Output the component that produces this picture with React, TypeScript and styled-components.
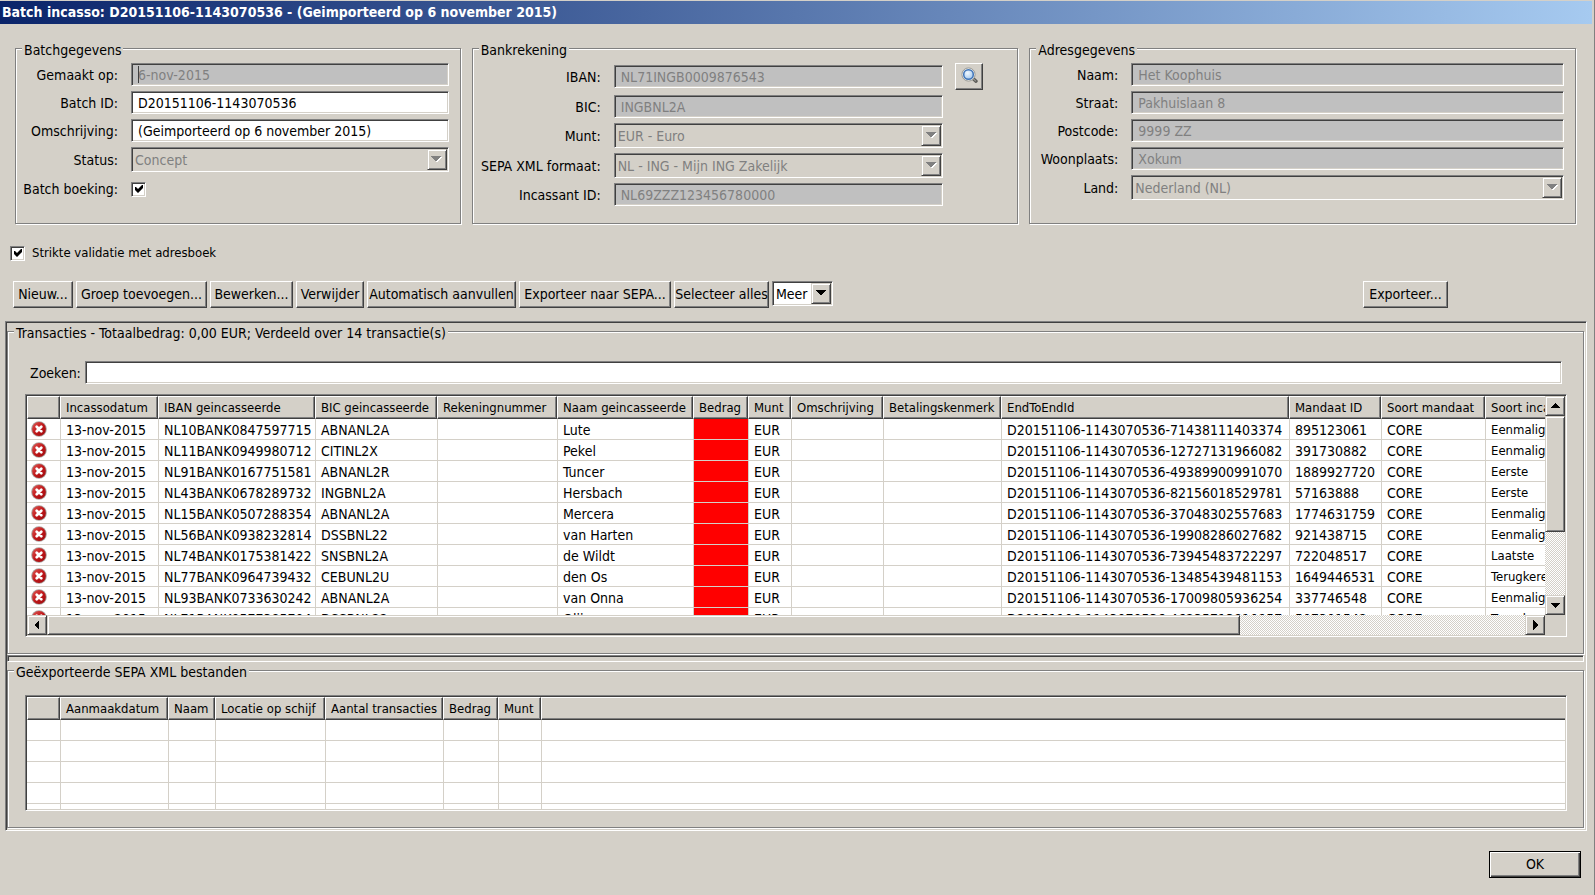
import React from "react";
import styled, { createGlobalStyle, css } from "styled-components";

const face = "#d4d0c8";
const shadow = "#808080";
const dark = "#404040";
const light = "#ffffff";

const GlobalStyle = createGlobalStyle`
  * { box-sizing: border-box; }
  body { margin: 0; background: ${face}; }
  body, button, input, select {
    font-family: "DejaVu Sans Condensed", "DejaVu Sans", sans-serif;
    font-size: 14px;
    line-height: 16px;
    color: #000;
  }
`;

const sunken = css`
  border: 1px solid;
  border-color: ${shadow} ${light} ${light} ${shadow};
  box-shadow: inset 1px 1px 0 ${dark}, inset -1px -1px 0 ${face};
`;

const raised = css`
  border: 1px solid;
  border-color: ${light} ${dark} ${dark} ${light};
  box-shadow: inset -1px -1px 0 ${shadow};
`;

const thumbEdge = css`
  border: 1px solid;
  border-color: ${face} ${dark} ${dark} ${face};
  box-shadow: inset 1px 1px 0 ${light}, inset -1px -1px 0 ${shadow};
`;

const Window = styled.main`
  display: flex;
  flex-direction: column;
  min-height: 100vh;
  padding: 1px 0 16px;
  background: ${face};
  border-right: 1px solid ${shadow};
`;

const TitleBar = styled.h1`
  margin: 0 2px 0 0;
  height: 23px;
  padding-left: 2px;
  font-size: 14px;
  line-height: 23px;
  font-weight: bold;
  color: #fff;
  white-space: nowrap;
  background: linear-gradient(to right, #0a246a, #a6caf0);
`;

const Groups = styled.div`
  display: grid;
  grid-template-columns: 446fr 547fr 547fr;
  gap: 11px;
  padding: 16px 18px 0 15px;
`;

const Group = styled.fieldset`
  min-width: 0;
  margin: 0;
  padding: 0;
  border: 1px solid ${shadow};
  box-shadow: 1px 1px 0 ${light}, inset 1px 1px 0 ${light};
`;

const Legend = styled.legend`
  margin-left: 6px;
  padding: 4px 2px 0;
  line-height: 12px;
  background: ${face};
`;

const FormGrid = styled.div<{ $label: number; $side?: boolean }>`
  display: grid;
  grid-template-columns: ${(p) => p.$label}px minmax(0, 1fr) ${(p) => (p.$side ? "28px" : "")};
  column-gap: 12px;
  row-gap: 5px;
  align-items: center;
  padding: 7px ${(p) => (p.$side ? 34 : 11)}px 17px 0;
`;

const Label = styled.label`
  grid-column: 1;
  padding-right: 1px;
  text-align: right;
  white-space: nowrap;
`;

const CheckLabel = styled(Label)`
  line-height: 24px;
`;

const Field = styled.div`
  position: relative;
  grid-column: 2;
  display: flex;
`;

const TextBox = styled.input`
  ${sunken}
  flex: 1;
  min-width: 0;
  height: 23px;
  padding: 0 6px;
  border-radius: 0;
  outline: 0;
  background: #fff;
  &:disabled { background: #c0c0c0; color: ${shadow}; }
`;

const Caret = styled.span`
  position: absolute;
  left: 7px;
  top: 3px;
  width: 1px;
  height: 17px;
  background: ${dark};
`;

const SelectWrap = styled.div<{ $width?: number }>`
  position: relative;
  grid-column: 2;
  display: flex;
  width: ${(p) => (p.$width ? p.$width + "px" : "auto")};
`;

const SelectBox = styled.select`
  ${sunken}
  appearance: none;
  flex: 1;
  min-width: 0;
  height: 25px;
  padding: 0 22px 0 3px;
  border-radius: 0;
  outline: 0;
  background: #fff;
  &:disabled { background: ${face}; color: ${shadow}; opacity: 1; }
`;

const DropArrow = styled.span`
  ${thumbEdge}
  position: absolute;
  top: 2px;
  right: 2px;
  bottom: 2px;
  width: 20px;
  display: grid;
  place-items: center;
  background: ${face};
  pointer-events: none;
`;

const CheckWrap = styled.span`
  position: relative;
  grid-column: 2;
  width: 15px;
  height: 15px;
  svg { position: absolute; left: 4px; top: 3px; pointer-events: none; }
`;

const CheckBox = styled.input`
  ${sunken}
  appearance: none;
  display: block;
  width: 15px;
  height: 15px;
  margin: 0;
  background: #fff;
`;

const StrictRow = styled.div`
  display: flex;
  align-items: center;
  gap: 7px;
  padding: 21px 10px 0;
  font-size: 13px;
`;

const Toolbar = styled.div`
  display: flex;
  align-items: flex-start;
  gap: 3px;
  padding: 20px 146px 13px 13px;
`;

const Button = styled.button<{ $width: number }>`
  ${raised}
  flex: none;
  width: ${(p) => p.$width}px;
  height: 27px;
  padding: 0 0 2px;
  border-radius: 0;
  background: ${face};
  white-space: nowrap;
  display: grid;
  place-items: center;
`;

const ExportButton = styled(Button)`
  margin-left: auto;
`;

const DefaultButton = styled(Button)`
  border-color: #000;
  box-shadow: inset 1px 1px 0 ${light}, inset -1px -1px 0 ${dark}, inset -2px -2px 0 ${shadow};
`;

const SplitFrame = styled.div`
  ${sunken}
  margin: 0 7px 0 5px;
  padding: 1px 2px 2px 1px;
`;

const Splitter = styled.div`
  ${sunken}
  height: 7px;
  margin-top: 1px;
`;

const SearchRow = styled.div`
  display: flex;
  align-items: center;
  margin: 22px 21px 10px 22px;
`;

const SearchLabel = styled.label`
  width: 55px;
`;

const ExportArea = styled.div`
  padding-top: 17px;
`;

const TableFrame = styled.div`
  ${sunken}
  display: grid;
  grid-template-columns: minmax(0, 1fr) auto;
  padding: 1px;
  margin: 0 16px 16px 17px;
`;

const Viewport = styled.div<{ $height: number }>`
  height: ${(p) => p.$height}px;
  overflow: hidden;
  background: #fff;
`;

const Table = styled.table`
  width: 100%;
  table-layout: fixed;
  border-collapse: separate;
  border-spacing: 0;
`;

const HeadCell = styled.th`
  height: 23px;
  padding: 0 0 0 5px;
  border: 1px solid;
  border-color: ${light} ${dark} ${dark} ${light};
  box-shadow: inset -1px -1px 0 ${shadow};
  background: ${face};
  font-size: 13px;
  font-weight: normal;
  text-align: left;
  white-space: nowrap;
  overflow: hidden;
  &:last-child { border-right: 0; box-shadow: inset 0 -1px 0 ${shadow}; }
`;

const Cell = styled.td<{ $alert?: boolean }>`
  height: 21px;
  padding: 2px 0 0 5px;
  border-left: 1px solid ${face};
  border-bottom: 1px solid ${face};
  background: ${(p) => (p.$alert ? "#ff0000" : "#fff")};
  background-clip: padding-box;
  white-space: nowrap;
  overflow: hidden;
  &:first-child { border-left: 0; padding: 0 0 0 4px; }
  &:last-child { font-size: 13px; }
  svg { display: block; }
`;

const dither = css`
  background: conic-gradient(#fff 25%, ${face} 0 50%, #fff 0 75%, ${face} 0) 0 0 / 2px 2px;
`;

const VScroll = styled.div`
  ${dither}
  display: flex;
  flex-direction: column;
  width: 20px;
`;

const HScroll = styled.div`
  ${dither}
  display: flex;
  height: 20px;
`;

const ScrollButton = styled.button`
  ${thumbEdge}
  flex: none;
  width: 20px;
  height: 20px;
  padding: 0;
  border-radius: 0;
  background: ${face};
  display: grid;
  place-items: center;
`;

const ScrollThumb = styled.div<{ $share: number }>`
  ${thumbEdge}
  flex: ${(p) => p.$share} 0 0;
  background: ${face};
`;

const ScrollRest = styled.div<{ $share: number }>`
  flex: ${(p) => p.$share} 0 0;
`;

const Footer = styled.footer`
  display: flex;
  justify-content: flex-end;
  padding: 20px 13px 0;
`;

const Tick = () => (
  <svg width="8" height="8" viewBox="0 0 8 8" aria-hidden="true">
    <path d="M0 2L1 2L3 4L7 0H8V3L3 8L0 5Z" fill="#000" />
  </svg>
);

const Down = ({ off }: { off?: boolean }) => (
  <svg width="11" height="7" viewBox="0 0 11 7" shapeRendering="crispEdges" aria-hidden="true">
    {off && <path d="M1 1H11L6 7Z" fill="#fff" />}
    <path d="M0 0H10L5 6Z" fill={off ? shadow : "#000"} />
  </svg>
);

const arrows = {
  up: "M0 7L5 2L10 7Z",
  down: "M0 3H10L5 8Z",
  left: "M7 0V10L2 5Z",
  right: "M3 0V10L8 5Z",
};

const ScrollArrow = ({ dir }: { dir: keyof typeof arrows }) => (
  <ScrollButton type="button" aria-label={dir}>
    <svg width="10" height="10" viewBox="0 0 10 10" shapeRendering="crispEdges">
      <path d={arrows[dir]} fill="#000" />
    </svg>
  </ScrollButton>
);

const ErrorIcon = () => (
  <svg width="16" height="16" viewBox="0 0 16 16" role="img" aria-label="Fout">
    <defs>
      <linearGradient id="errorFill" x1="0" y1="0" x2="1" y2="1">
        <stop offset="0" stopColor="#e05a56" />
        <stop offset="0.5" stopColor="#c0181a" />
        <stop offset="1" stopColor="#9c0a0e" />
      </linearGradient>
    </defs>
    <circle cx="8" cy="8" r="7.8" fill="#aaa19e" />
    <circle cx="8" cy="8" r="6.9" fill="url(#errorFill)" />
    <path d="M5.7 5.7L10.3 10.3M10.3 5.7L5.7 10.3" stroke="#fff" strokeWidth="2.8" strokeLinecap="round" />
  </svg>
);

const SearchIcon = () => (
  <svg width="17" height="17" viewBox="0 0 17 17" aria-hidden="true">
    <defs>
      <radialGradient id="lensFill" cx="0.4" cy="0.35" r="0.7">
        <stop offset="0" stopColor="#f0f8ff" />
        <stop offset="1" stopColor="#a2c6ec" />
      </radialGradient>
    </defs>
    <path d="M12 11.5L15 14.2" stroke="#5c5c58" strokeWidth="3.4" strokeLinecap="round" />
    <path d="M12.5 12L14.5 13.8" stroke="#b4b4b0" strokeWidth="1" strokeLinecap="round" />
    <circle cx="7.5" cy="7.5" r="6.6" fill="#eeeeea" stroke="#9c9c98" strokeWidth="1" />
    <circle cx="7.5" cy="7.5" r="4.8" fill="url(#lensFill)" stroke="#3f74b8" strokeWidth="1.5" />
  </svg>
);

type TextFieldProps = { id: string; label: string; value: string; disabled?: boolean; caret?: boolean };
const TextField = ({ id, label, value, disabled, caret }: TextFieldProps) => (
  <>
    <Label htmlFor={id}>{label}</Label>
    <Field>
      <TextBox id={id} type="text" defaultValue={value} disabled={disabled} />
      {caret && <Caret />}
    </Field>
  </>
);

const SelectField = ({ id, label, value }: { id: string; label: string; value: string }) => (
  <>
    <Label htmlFor={id}>{label}</Label>
    <SelectWrap>
      <SelectBox id={id} disabled>
        <option>{value}</option>
      </SelectBox>
      <DropArrow>
        <Down off />
      </DropArrow>
    </SelectWrap>
  </>
);

const columns: [string, number | undefined][] = [
  ["", 33],
  ["Incassodatum", 98],
  ["IBAN geincasseerde", 157],
  ["BIC geincasseerde", 122],
  ["Rekeningnummer", 120],
  ["Naam geincasseerde", 136],
  ["Bedrag", 55],
  ["Munt", 43],
  ["Omschrijving", 92],
  ["Betalingskenmerk", 118],
  ["EndToEndId", 288],
  ["Mandaat ID", 92],
  ["Soort mandaat", 104],
  ["Soort incasso", undefined],
];

const transactions: [string, string, string, string, string, string][] = [
  ["NL10BANK0847597715", "ABNANL2A", "Lute", "71438111403374", "895123061", "Eenmalig"],
  ["NL11BANK0949980712", "CITINL2X", "Pekel", "12727131966082", "391730882", "Eenmalig"],
  ["NL91BANK0167751581", "ABNANL2R", "Tuncer", "49389900991070", "1889927720", "Eerste"],
  ["NL43BANK0678289732", "INGBNL2A", "Hersbach", "82156018529781", "57163888", "Eerste"],
  ["NL15BANK0507288354", "ABNANL2A", "Mercera", "37048302557683", "1774631759", "Eenmalig"],
  ["NL56BANK0938232814", "DSSBNL22", "van Harten", "19908286027682", "921438715", "Eenmalig"],
  ["NL74BANK0175381422", "SNSBNL2A", "de Wildt", "73945483722297", "722048517", "Laatste"],
  ["NL77BANK0964739432", "CEBUNL2U", "den Os", "13485439481153", "1649446531", "Terugkerend"],
  ["NL93BANK0733630242", "ABNANL2A", "van Onna", "17009805936254", "337746548", "Eenmalig"],
  ["NL71BANK0577385704", "DSSBNL22", "Olij", "46235713810957", "507301542", "Terugkerend"],
];

const exportColumns: [string, number | undefined][] = [
  ["", 33],
  ["Aanmaakdatum", 108],
  ["Naam", 47],
  ["Locatie op schijf", 110],
  ["Aantal transacties", 118],
  ["Bedrag", 55],
  ["Munt", 43],
  ["", undefined],
];

const TableHead = ({ cols }: { cols: [string, number | undefined][] }) => (
  <>
    <colgroup>
      {cols.map(([, width], i) => (
        <col key={i} width={width} />
      ))}
    </colgroup>
    <thead>
      <tr>
        {cols.map(([title], i) => (
          <HeadCell key={i}>{title}</HeadCell>
        ))}
      </tr>
    </thead>
  </>
);

const actions: [string, number][] = [
  ["Nieuw...", 60],
  ["Groep toevoegen...", 131],
  ["Bewerken...", 83],
  ["Verwijder", 68],
  ["Automatisch aanvullen", 149],
  ["Exporteer naar SEPA...", 152],
  ["Selecteer alles", 95],
];

export default function App() {
  return (
    <Window>
      <GlobalStyle />
      <TitleBar>Batch incasso: D20151106-1143070536 - (Geimporteerd op 6 november 2015)</TitleBar>

      <Groups>
        <Group>
          <Legend>Batchgegevens</Legend>
          <FormGrid $label={103}>
            <TextField id="created" label="Gemaakt op:" value="6-nov-2015" disabled caret />
            <TextField id="batchId" label="Batch ID:" value="D20151106-1143070536" />
            <TextField id="description" label="Omschrijving:" value="(Geimporteerd op 6 november 2015)" />
            <SelectField id="status" label="Status:" value="Concept" />
            <CheckLabel htmlFor="booking">Batch boeking:</CheckLabel>
            <CheckWrap>
              <CheckBox id="booking" type="checkbox" defaultChecked />
              <Tick />
            </CheckWrap>
          </FormGrid>
        </Group>

        <Group>
          <Legend>Bankrekening</Legend>
          <FormGrid $label={129} $side>
            <TextField id="iban" label="IBAN:" value="NL71INGB0009876543" disabled />
            <Button type="button" $width={28} aria-label="Zoeken">
              <SearchIcon />
            </Button>
            <TextField id="bic" label="BIC:" value="INGBNL2A" disabled />
            <SelectField id="currency" label="Munt:" value="EUR - Euro" />
            <SelectField id="format" label="SEPA XML formaat:" value="NL - ING - Mijn ING Zakelijk" />
            <TextField id="creditor" label="Incassant ID:" value="NL69ZZZ123456780000" disabled />
          </FormGrid>
        </Group>

        <Group>
          <Legend>Adresgegevens</Legend>
          <FormGrid $label={89}>
            <TextField id="name" label="Naam:" value="Het Koophuis" disabled />
            <TextField id="street" label="Straat:" value="Pakhuislaan 8" disabled />
            <TextField id="postcode" label="Postcode:" value="9999 ZZ" disabled />
            <TextField id="city" label="Woonplaats:" value="Xokum" disabled />
            <SelectField id="country" label="Land:" value="Nederland (NL)" />
          </FormGrid>
        </Group>
      </Groups>

      <StrictRow>
        <CheckWrap>
          <CheckBox id="strict" type="checkbox" defaultChecked />
          <Tick />
        </CheckWrap>
        <label htmlFor="strict">Strikte validatie met adresboek</label>
      </StrictRow>

      <Toolbar>
        {actions.map(([text, width]) => (
          <Button key={text} type="button" $width={width}>
            {text}
          </Button>
        ))}
        <SelectWrap $width={61}>
          <SelectBox aria-label="Meer">
            <option>Meer</option>
          </SelectBox>
          <DropArrow>
            <Down />
          </DropArrow>
        </SelectWrap>
        <ExportButton type="button" $width={85}>
          Exporteer...
        </ExportButton>
      </Toolbar>

      <SplitFrame>
        <Group>
          <Legend>Transacties - Totaalbedrag: 0,00 EUR; Verdeeld over 14 transactie(s)</Legend>
          <SearchRow>
            <SearchLabel htmlFor="search">Zoeken:</SearchLabel>
            <TextBox id="search" type="text" />
          </SearchRow>
          <TableFrame>
            <Viewport $height={219}>
              <Table>
                <TableHead cols={columns} />
                <tbody>
                  {transactions.map(([iban, bic, name, end, mandate, kind]) => (
                    <tr key={iban}>
                      <Cell>
                        <ErrorIcon />
                      </Cell>
                      <Cell>13-nov-2015</Cell>
                      <Cell>{iban}</Cell>
                      <Cell>{bic}</Cell>
                      <Cell />
                      <Cell>{name}</Cell>
                      <Cell $alert />
                      <Cell>EUR</Cell>
                      <Cell />
                      <Cell />
                      <Cell>D20151106-1143070536-{end}</Cell>
                      <Cell>{mandate}</Cell>
                      <Cell>CORE</Cell>
                      <Cell>{kind}</Cell>
                    </tr>
                  ))}
                </tbody>
              </Table>
            </Viewport>
            <VScroll>
              <ScrollArrow dir="up" />
              <ScrollThumb $share={115} />
              <ScrollRest $share={64} />
              <ScrollArrow dir="down" />
            </VScroll>
            <HScroll>
              <ScrollArrow dir="left" />
              <ScrollThumb $share={1193} />
              <ScrollRest $share={285} />
              <ScrollArrow dir="right" />
            </HScroll>
          </TableFrame>
        </Group>
        <Splitter />
        <Group>
          <Legend>Geëxporteerde SEPA XML bestanden</Legend>
          <ExportArea>
            <TableFrame>
              <Viewport $height={112}>
                <Table>
                  <TableHead cols={exportColumns} />
                  <tbody>
                    {[0, 1, 2, 3, 4].map((row) => (
                      <tr key={row}>
                        {exportColumns.map((_, i) => (
                          <Cell key={i} />
                        ))}
                      </tr>
                    ))}
                  </tbody>
                </Table>
              </Viewport>
            </TableFrame>
          </ExportArea>
        </Group>
      </SplitFrame>

      <Footer>
        <DefaultButton type="button" $width={92}>
          OK
        </DefaultButton>
      </Footer>
    </Window>
  );
}
